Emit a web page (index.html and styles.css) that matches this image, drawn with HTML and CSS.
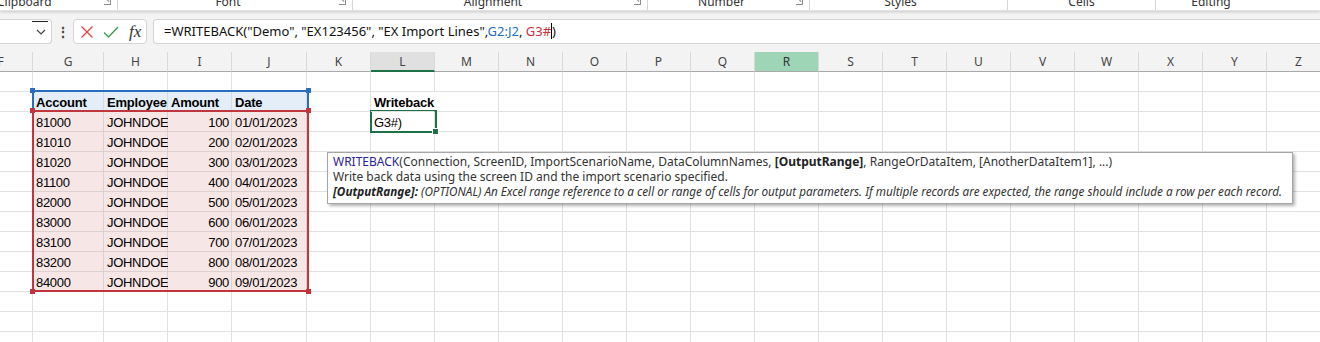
FILE: index.html
```html
<!DOCTYPE html>
<html lang="en">
<head>
  <meta charset="UTF-8">
  <title>Writeback - Excel</title>
  <link rel="stylesheet" href="styles.css">
</head>
<body>

<div class="ribbon">
  <div class="group g-clip"><span class="label">Clipboard</span><span class="launch"></span></div>
  <div class="group g-font"><span class="label">Font</span><span class="launch"></span></div>
  <div class="group g-align"><span class="label">Alignment</span><span class="launch"></span></div>
  <div class="group g-num"><span class="label">Number</span><span class="launch"></span></div>
  <div class="group g-styles"><span class="label">Styles</span></div>
  <div class="group g-cells"><span class="label">Cells</span></div>
  <div class="group g-edit"><span class="label">Editing</span></div>
</div>

<div class="formula-area">
  <div class="name-box">
    <span class="focus-mark"></span>
    <svg class="chev" width="10" height="6" viewBox="0 0 10 6"><path d="M1 1l4 4 4-4" fill="none" stroke="#444" stroke-width="1.2"/></svg>
  </div>
  <div class="dots">⋮</div>
  <div class="fx-buttons">
    <svg width="14" height="14" viewBox="0 0 14 14"><path d="M1.5 1.5l11 11M12.5 1.5l-11 11" stroke="#e0403c" stroke-width="1.3"/></svg>
    <svg width="16" height="14" viewBox="0 0 16 14"><path d="M1 7.5l4.5 4.5L15 2" fill="none" stroke="#3a9a4c" stroke-width="1.3"/></svg>
    <span class="fx">fx</span>
  </div>
  <div class="formula-input">
    <span>=WRITEBACK("Demo", "EX123456", "EX Import Lines",</span><span class="ref-blue">G2:J2</span><span>, </span><span class="ref-red">G3#</span><span class="caret"></span><span>)</span>
  </div>
</div>

<div class="sheet">
  <div class="col-heads" id="heads"></div>
  <div class="grid" id="grid"></div>

  <div class="range range-blue"><i class="h tl"></i><i class="h tr"></i></div>
  <div class="range range-red"><i class="h tl"></i><i class="h tr"></i><i class="h bl"></i><i class="h br"></i></div>
  <div class="active-cell"><i class="fill-handle"></i></div>

  <div class="tip">
    <div><span class="fn">WRITEBACK</span>(Connection, ScreenID, ImportScenarioName, DataColumnNames, <b>[OutputRange]</b>, RangeOrDataItem, [AnotherDataItem1], ...)</div>
    <div>Write back data using the screen ID and the import scenario specified.</div>
    <div class="it"><b>[OutputRange]:</b> (OPTIONAL) An Excel range reference to a cell or range of cells for output parameters. If multiple records are expected, the range should include a row per each record.</div>
  </div>
</div>

<script>
  const cols = ['F','G','H','I','J','K','L','M','N','O','P','Q','R','S','T','U','V','W','X','Y','Z'];
  const rows = 14;

  const accounts = ['81000','81010','81020','81100','82000','83000','83100','83200','84000'];

  const cells = {
    G2: { v: 'Account', cls: 'bold head-fill' },
    H2: { v: 'Employee', cls: 'bold head-fill' },
    I2: { v: 'Amount', cls: 'bold head-fill' },
    J2: { v: 'Date', cls: 'bold head-fill' },
    L2: { v: 'Writeback', cls: 'bold spill' },
    L3: { v: 'G3#)', cls: '' }
  };
  accounts.forEach((acc, i) => {
    const r = i + 3;
    cells['G' + r] = { v: acc, cls: 'data-fill' };
    cells['H' + r] = { v: 'JOHNDOE', cls: 'data-fill' };
    cells['I' + r] = { v: String((i + 1) * 100), cls: 'data-fill num' };
    cells['J' + r] = { v: `0${i + 1}/01/2023`, cls: 'data-fill' };
  });

  const heads = document.getElementById('heads');
  cols.forEach(c => {
    const h = document.createElement('div');
    h.className = 'col-head';
    if (c === 'L') h.classList.add('col-sel');
    if (c === 'R') h.classList.add('col-mark');
    h.textContent = c;
    heads.appendChild(h);
  });

  const grid = document.getElementById('grid');
  for (let r = 1; r <= rows; r++) {
    cols.forEach(c => {
      const cell = document.createElement('div');
      cell.className = 'cell';
      const data = cells[c + r];
      if (data) {
        if (data.cls) cell.className += ' ' + data.cls;
        cell.textContent = data.v;
      }
      grid.appendChild(cell);
    });
  }
</script>

</body>
</html>
```

FILE: styles.css
```css
body {
  margin: 0;
  width: 1320px;
  height: 342px;
  overflow: hidden;
  background-color: #ffffff;
  font-family: "Noto Sans", "Open Sans", sans-serif;
}

.ribbon {
  height: 11px;
  display: flex;
  background-color: #ffffff;
  overflow: hidden;
  position: relative;
  z-index: 2;
  box-shadow: 0 1px 3px rgba(0,0,0,0.18);
  border-bottom: 1px solid #e3e3e3;
  box-sizing: border-box;
}
.group {
  flex: none;
  height: 11px;
  display: flex;
  justify-content: center;
  border-right: 1px solid #d6d6d6;
  box-sizing: border-box;
  position: relative;
  font-size: 12px;
  color: #333;
}
.group .label {
  line-height: 12px;
  margin-top: -4px;
}
.launch {
  position: absolute;
  right: 6px;
  top: -2px;
  width: 6px;
  height: 6px;
  border-right: 1px solid #8a8a8a;
  border-bottom: 1px solid #8a8a8a;
}
.launch::after {
  content: "";
  position: absolute;
  left: 0;
  top: 1px;
  width: 6px;
  height: 1px;
  background-color: #8a8a8a;
  transform: rotate(45deg);
}
.g-clip { justify-content: flex-start; margin-left: -3px; width: 121px; }
.g-font { width: 235px; padding-right: 14px; }
.g-align { width: 295px; padding-right: 14px; }
.g-num { width: 162px; padding-right: 14px; }
.g-styles { width: 198px; padding-right: 16px; }
.g-cells { width: 148px; }
.g-edit { width: 200px; border-right: none; padding-right: 90px; }

/* formula bar */
.formula-area {
  background-color: #f3f3f3;
  padding: 8px 0 8px 0;
  display: flex;
  align-items: stretch;
  height: 25px;
}
.name-box {
  width: 56px;
  margin-left: -4px;
  background-color: #ffffff;
  border: 1px solid #d4d4d4;
  border-left: none;
  border-radius: 0 4px 4px 0;
  box-sizing: border-box;
  position: relative;
  display: flex;
  align-items: center;
  justify-content: flex-end;
  padding-right: 5px;
}
.focus-mark {
  position: absolute;
  top: 1px;
  right: 3px;
  width: 16px;
  height: 1px;
  background-color: #222;
}
.dots {
  width: 21px;
  text-align: center;
  font-size: 14px;
  line-height: 25px;
  color: #444;
  font-weight: bold;
}
.fx-buttons {
  width: 74px;
  background-color: #ffffff;
  border: 1px solid #d4d4d4;
  border-radius: 4px;
  box-sizing: border-box;
  display: flex;
  align-items: center;
  gap: 9px;
  padding-left: 6px;
}
.fx {
  font-family: "Liberation Serif", serif;
  font-style: italic;
  font-size: 17px;
  color: #333;
  margin-left: 1px;
}
.formula-input {
  flex: 1;
  margin-left: 6px;
  background-color: #ffffff;
  border: 1px solid #d4d4d4;
  border-right: none;
  border-radius: 4px 0 0 4px;
  box-sizing: border-box;
  padding-left: 10px;
  font-size: 13px;
  line-height: 23px;
  color: #111;
  white-space: nowrap;
}
.ref-blue { color: #1f6fc5; }
.ref-red { color: #c8323a; }
.caret {
  display: inline-block;
  width: 1px;
  height: 16px;
  background-color: #000;
  vertical-align: -3px;
}

/* sheet */
.sheet {
  position: relative;
}
.col-heads, .grid {
  display: grid;
  grid-template-columns: 64px 71px 64px 64px 75px repeat(16, 64px);
  margin-left: -31px;
}
.col-head {
  height: 20px;
  box-sizing: border-box;
  border-right: 1px solid #d9d9d9;
  border-bottom: 1px solid #a8a8a8;
  background-color: #f3f3f3;
  font-size: 12px;
  line-height: 19px;
  text-align: center;
  color: #444;
}
.col-sel {
  background-color: #e0e0e0;
  border-bottom: 2px solid #1e7145;
}
.col-mark {
  background-color: #9fd5b7;
  color: #333;
}
.cell {
  height: 20px;
  box-sizing: border-box;
  border-right: 1px solid #e1e1e1;
  border-bottom: 1px solid #e1e1e1;
  font-family: "Liberation Sans", Arial, sans-serif;
  font-size: 13px;
  letter-spacing: -0.3px;
  line-height: 21px;
  padding: 0 2px 0 3px;
  white-space: nowrap;
  color: #000;
}
.bold { font-weight: bold; letter-spacing: -0.2px; }
.num { text-align: right; }
.head-fill {
  background-color: #e3eef9;
  border-color: #d3dbe4;
}
.data-fill {
  background-color: #f7e6e6;
  border-color: #dcd0d0;
}
.spill {
  overflow: visible;
  border-right-color: transparent;
  position: relative;
  z-index: 1;
}

/* reference outlines drawn over the cells */
.range {
  position: absolute;
  box-sizing: border-box;
  border: 2px solid;
}
.range-blue {
  left: 32px;
  top: 38px;
  width: 277px;
  height: 23px;
  border-color: #2a6fbd;
  border-bottom: none;
}
.range-red {
  left: 32px;
  top: 58px;
  width: 277px;
  height: 182px;
  border-color: #c1363c;
}
.h {
  position: absolute;
  width: 5px;
  height: 5px;
}
.range-blue .h { background-color: #2a6fbd; }
.range-red .h { background-color: #c1363c; }
.tl { left: -4px; top: -4px; }
.tr { right: -4px; top: -4px; }
.bl { left: -4px; bottom: -4px; }
.br { right: -4px; bottom: -4px; }

.active-cell {
  position: absolute;
  left: 370px;
  top: 58px;
  width: 67px;
  height: 23px;
  box-sizing: border-box;
  border: 2px solid #1e7145;
}
.fill-handle {
  position: absolute;
  right: -4px;
  bottom: -4px;
  width: 5px;
  height: 5px;
  background-color: #1e7145;
  border: 1px solid #ffffff;
}

/* function tooltip */
.tip {
  position: absolute;
  left: 327px;
  top: 100px;
  width: 966px;
  height: 52px;
  box-sizing: border-box;
  background-color: #ffffff;
  border: 1px solid #a6a6a6;
  box-shadow: 2px 2px 3px rgba(0,0,0,0.3);
  padding: 1px 5px;
  font-family: "Noto Sans", sans-serif;
  font-size: 12px;
  line-height: 15px;
  color: #333;
  white-space: nowrap;
}
.tip .fn { color: #2b1d9e; }
.tip b { color: #222; }
.tip .it { font-size: 11.7px; font-style: italic; }
```
